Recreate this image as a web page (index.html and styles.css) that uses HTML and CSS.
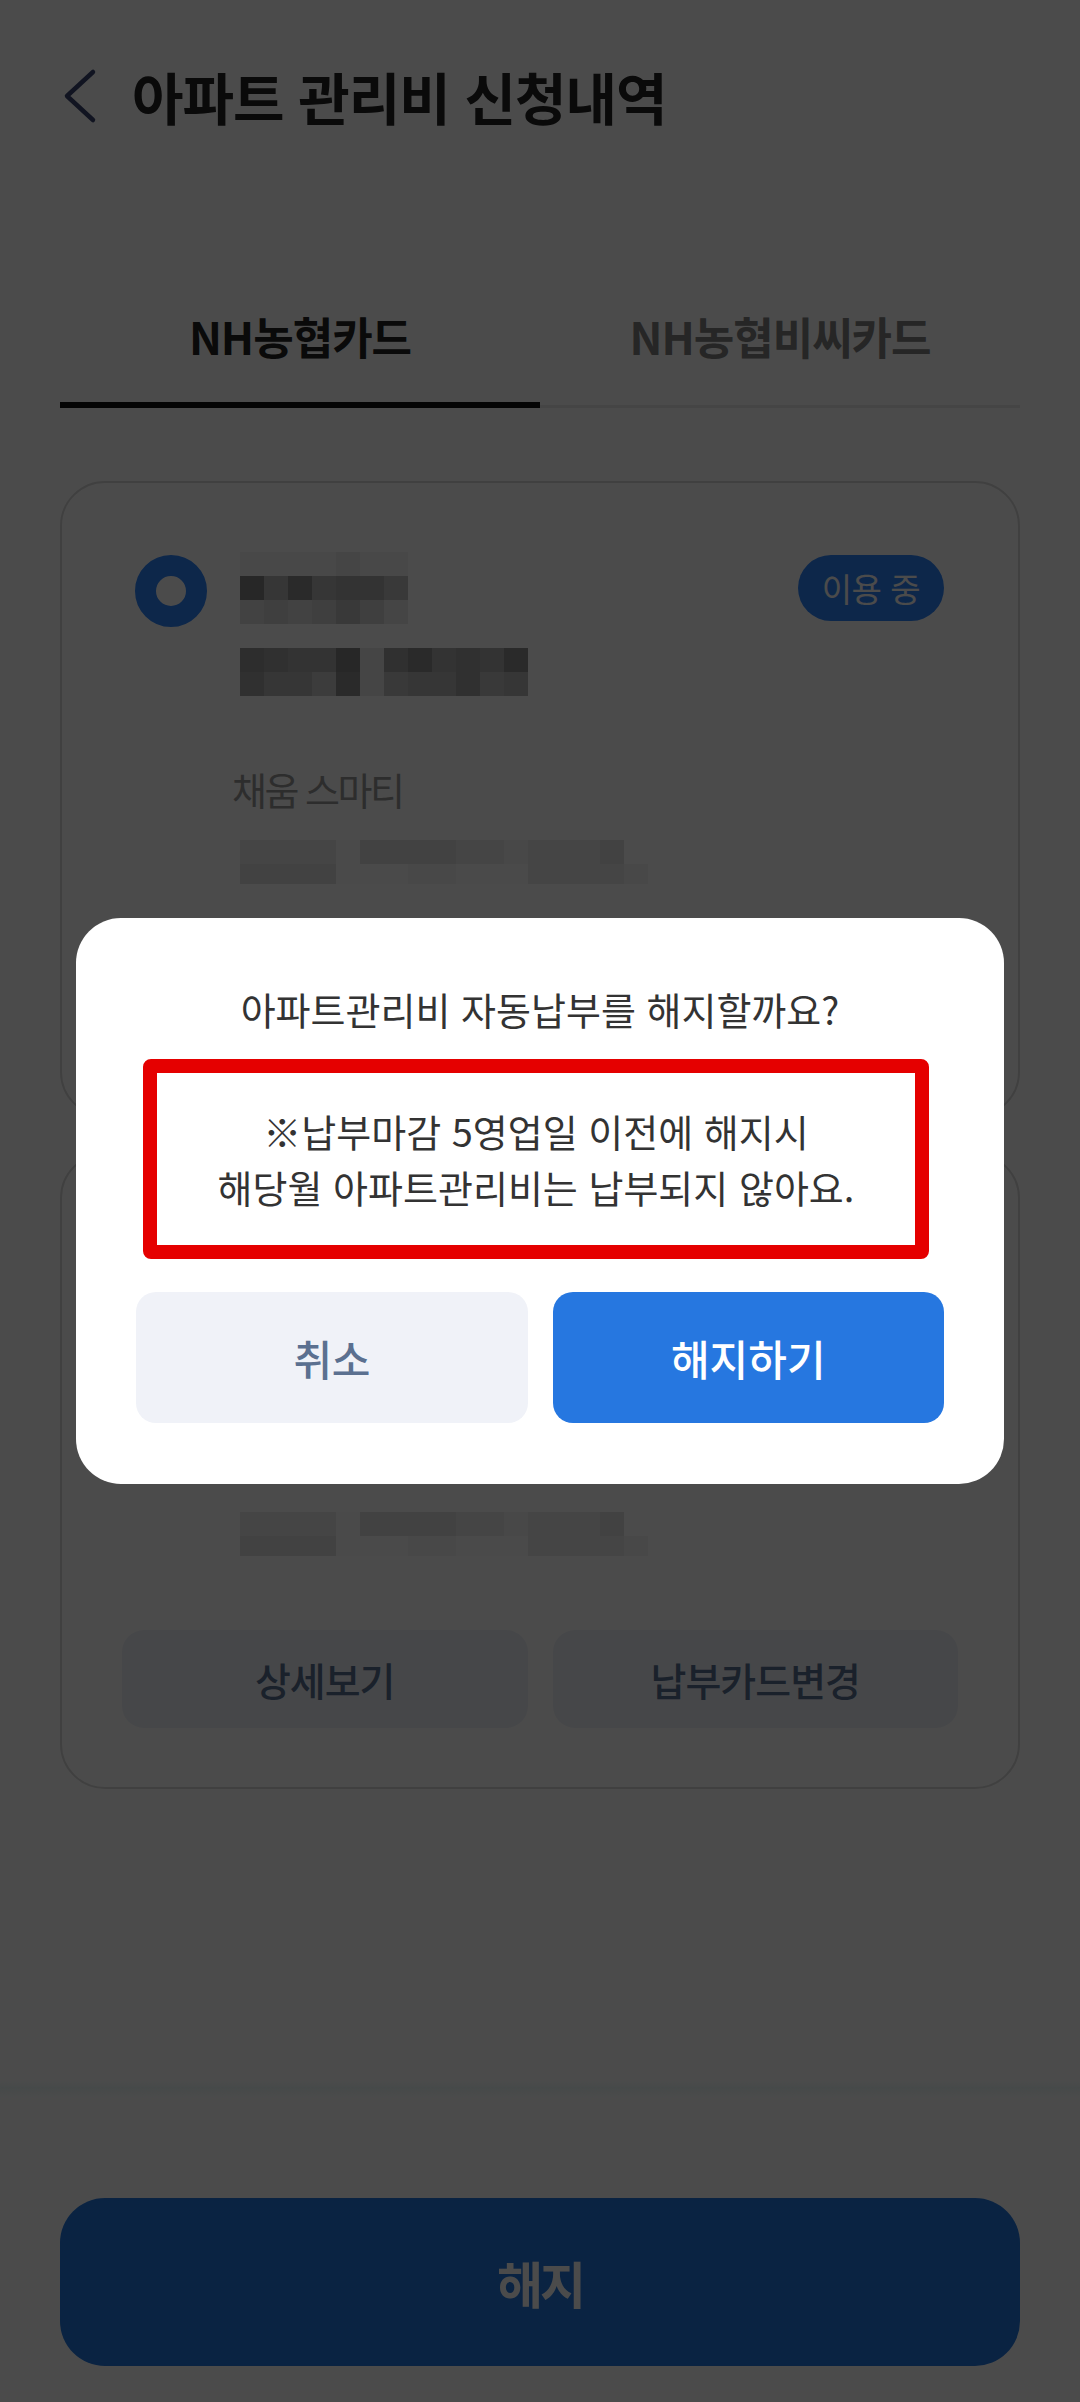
FILE: index.html
```html
<!DOCTYPE html>
<html lang="ko">
<head>
<meta charset="utf-8">
<title>아파트 관리비 신청내역</title>
<link rel="stylesheet" href="styles.css">
</head>
<body>
<div class="app">
  <header class="header">
    <svg class="back" viewBox="0 0 40 64" width="40" height="64" aria-hidden="true">
      <polyline points="33,8 7,32 33,56" fill="none" stroke="currentColor" stroke-width="4.5" stroke-linecap="round" stroke-linejoin="round"/>
    </svg>
    <h1 class="title">아파트 관리비 신청내역</h1>
  </header>

  <nav class="tabs">
    <div class="tab active">NH농협카드</div>
    <div class="tab">NH농협비씨카드</div>
  </nav>

  <section class="cards">
    <article class="card">
      <div class="card-top">
        <span class="radio on"></span>
        <div class="info">
          <div class="mosaic w7">
            <i class="q72"></i><i class="q72"></i><i class="q72"></i><i class="q72"></i><i class="q69"></i><i class="q72"></i><i class="q72"></i>
            <i class="q39"></i><i class="q54"></i><i class="q42"></i><i class="q54"></i><i class="q51"></i><i class="q51"></i><i class="q57"></i>
            <i class="q66"></i><i class="q63"></i><i class="q66"></i><i class="q63"></i><i class="q57"></i><i class="q63"></i><i class="q69"></i>
          </div>
          <div class="mosaic w12 gap-a">
            <i class="q45"></i><i class="q48"></i><i class="q51"></i><i class="q51"></i><i class="q39"></i><i class="q69"></i><i class="q48"></i><i class="q42"></i><i class="q51"></i><i class="q48"></i><i class="q51"></i><i class="q42"></i>
            <i class="q48"></i><i class="q54"></i><i class="q54"></i><i class="q60"></i><i class="q42"></i><i class="q69"></i><i class="q57"></i><i class="q54"></i><i class="q54"></i><i class="q48"></i><i class="q57"></i><i class="q54"></i>
          </div>
          <p class="label">채움 스마티</p>
          <div class="mosaic w17 gap-b">
            <i class="q69"></i><i class="q69"></i><i class="q69"></i><i class="q69"></i><i class="q74"></i><i class="q66"></i><i class="q66"></i><i class="q66"></i><i class="q66"></i><i class="q69"></i><i class="q69"></i><i class="q72"></i><i class="q69"></i><i class="q69"></i><i class="q69"></i><i class="q66"></i><i></i>
            <i class="q66"></i><i class="q66"></i><i class="q66"></i><i class="q66"></i><i class="q74"></i><i class="q74"></i><i class="q74"></i><i class="q72"></i><i class="q72"></i><i class="q74"></i><i class="q74"></i><i class="q74"></i><i class="q69"></i><i class="q69"></i><i class="q69"></i><i class="q69"></i><i class="q72"></i>
          </div>
        </div>
        <span class="badge">이용 중</span>
      </div>
      <div class="card-actions">
        <button class="soft-btn">상세보기</button>
        <button class="soft-btn">납부카드변경</button>
      </div>
    </article>

    <article class="card">
      <div class="card-top">
        <span class="radio"></span>
        <div class="info">
          <div class="mosaic w7">
            <i class="q72"></i><i class="q72"></i><i class="q69"></i><i class="q72"></i><i class="q72"></i><i class="q69"></i><i class="q72"></i>
            <i class="q42"></i><i class="q51"></i><i class="q45"></i><i class="q54"></i><i class="q48"></i><i class="q54"></i><i class="q57"></i>
            <i class="q66"></i><i class="q63"></i><i class="q63"></i><i class="q66"></i><i class="q60"></i><i class="q63"></i><i class="q69"></i>
          </div>
          <div class="mosaic w12 gap-a">
            <i class="q45"></i><i class="q48"></i><i class="q51"></i><i class="q51"></i><i class="q39"></i><i class="q69"></i><i class="q48"></i><i class="q42"></i><i class="q51"></i><i class="q48"></i><i class="q51"></i><i class="q42"></i>
            <i class="q48"></i><i class="q54"></i><i class="q54"></i><i class="q60"></i><i class="q42"></i><i class="q69"></i><i class="q57"></i><i class="q54"></i><i class="q54"></i><i class="q48"></i><i class="q57"></i><i class="q54"></i>
          </div>
          <p class="label">채움 스마티</p>
          <div class="mosaic w17 gap-b">
            <i class="q69"></i><i class="q69"></i><i class="q69"></i><i class="q69"></i><i class="q74"></i><i class="q66"></i><i class="q66"></i><i class="q66"></i><i class="q66"></i><i class="q69"></i><i class="q69"></i><i class="q72"></i><i class="q69"></i><i class="q69"></i><i class="q69"></i><i class="q66"></i><i></i>
            <i class="q66"></i><i class="q66"></i><i class="q66"></i><i class="q66"></i><i class="q74"></i><i class="q74"></i><i class="q74"></i><i class="q72"></i><i class="q72"></i><i class="q74"></i><i class="q74"></i><i class="q74"></i><i class="q69"></i><i class="q69"></i><i class="q69"></i><i class="q69"></i><i class="q72"></i>
          </div>
        </div>
      </div>
      <div class="card-actions">
        <button class="soft-btn">상세보기</button>
        <button class="soft-btn">납부카드변경</button>
      </div>
    </article>
  </section>

  <footer class="footer">
    <button class="primary-btn">해지</button>
  </footer>
</div>

<div class="dim">
  <div class="modal" role="dialog">
    <p class="modal-title">아파트관리비 자동납부를 해지할까요?</p>
    <div class="notice">
      <p>※납부마감 5영업일 이전에 해지시</p>
      <p>해당월 아파트관리비는 납부되지 않아요.</p>
    </div>
    <div class="modal-actions">
      <button class="btn-cancel">취소</button>
      <button class="btn-confirm">해지하기</button>
    </div>
  </div>
</div>
</body>
</html>
```

FILE: styles.css
```css
* { box-sizing: border-box; }

html, body {
  margin: 0;
  padding: 0;
  width: 1080px;
  height: 2402px;
  overflow: hidden;
  background: #ffffff;
  font-family: "Noto Sans CJK KR", "Noto Sans", sans-serif;
  color: #222222;
}

p { margin: 0; }

button {
  font-family: inherit;
  border: 0;
  padding: 0;
  cursor: pointer;
}

.app {
  display: flex;
  flex-direction: column;
  height: 2402px;
}

/* header */
.header {
  height: 192px;
  display: flex;
  align-items: center;
  padding-left: 60px;
}

.back {
  display: block;
  color: #3a4670;
  flex: none;
}

.title {
  margin: 0 0 0 32px;
  font-size: 56px;
  line-height: 64px;
  font-weight: 700;
  letter-spacing: -1px;
  color: #222222;
}

/* tabs */
.tabs {
  display: flex;
  margin: 84px 60px 0;
}

.tab {
  flex: 1;
  height: 132px;
  padding-top: 30px;
  text-align: center;
  font-size: 44px;
  line-height: 60px;
  font-weight: 700;
  letter-spacing: -1px;
  color: #808080;
  border-bottom: 3px solid #ebebeb;
}

.tab.active {
  color: #222222;
  border-bottom: 6px solid #111111;
}

/* cards */
.cards {
  display: flex;
  flex-direction: column;
  gap: 36px;
  margin: 73px 60px 0;
}

.card {
  border: 2px solid #dadada;
  border-radius: 45px;
  padding: 69px 60px 59px;
  background: #ffffff;
}

.card-top {
  display: flex;
  align-items: flex-start;
}

.radio {
  flex: none;
  width: 72px;
  height: 72px;
  margin: 3px 0 0 13px;
  border-radius: 50%;
  border: 21px solid #d0d4dc;
  background: #ffffff;
}

.radio.on {
  border-color: #2c84fb;
}

.info {
  flex: 1;
  margin-left: 33px;
  display: flex;
  flex-direction: column;
  align-items: flex-start;
}

.mosaic {
  display: grid;
  grid-auto-rows: 24px;
}

.mosaic.w7 { grid-template-columns: repeat(7, 24px); }
.mosaic.w12 { grid-template-columns: repeat(12, 24px); }
.mosaic.w17 { grid-template-columns: repeat(17, 24px); grid-template-rows: 24px 20px; }

.gap-a { margin-top: 24px; }
.gap-b { margin-top: 25px; }

.mosaic i { display: block; }

.q39 { background: #858585; }
.q42 { background: #8f8f8f; }
.q45 { background: #999999; }
.q48 { background: #a3a3a3; }
.q51 { background: #adadad; }
.q54 { background: #b8b8b8; }
.q57 { background: #c2c2c2; }
.q60 { background: #cccccc; }
.q63 { background: #d6d6d6; }
.q66 { background: #e0e0e0; }
.q69 { background: #ebebeb; }
.q72 { background: #f5f5f5; }
.q74 { background: #fbfbfb; }

.label {
  margin-top: 67px;
  margin-left: -8px;
  font-size: 38px;
  line-height: 52px;
  letter-spacing: -2.5px;
  color: #9a9a9a;
}

.badge {
  flex: none;
  margin: 3px 14px 0 0;
  height: 66px;
  padding: 0 24px;
  border-radius: 33px;
  background: #2c84fb;
  color: #ffffff;
  font-size: 33px;
  line-height: 66px;
  letter-spacing: -0.5px;
}

.card-actions {
  display: grid;
  grid-template-columns: 1fr 1fr;
  gap: 25px;
  margin-top: 74px;
}

.soft-btn {
  height: 98px;
  border-radius: 22px;
  background: #eff2f8;
  color: #5a7191;
  font-size: 39px;
  font-weight: 500;
  letter-spacing: -1px;
}

/* footer */
.footer {
  margin-top: auto;
  padding: 118px 60px 36px;
  background: linear-gradient(to bottom, #ffffff 0, #eef9f9 8px, #ffffff 18px, #ffffff 100%);
}

.primary-btn {
  display: block;
  width: 100%;
  height: 168px;
  border-radius: 45px;
  background: #2277e0;
  color: #ffffff;
  font-size: 50px;
  font-weight: 700;
  letter-spacing: -3px;
}

/* dim overlay + dialog */
.dim {
  position: fixed;
  inset: 0;
  background: rgba(0, 0, 0, 0.706);
  display: flex;
  align-items: center;
  justify-content: center;
}

.modal {
  width: 928px;
  background: #ffffff;
  border-radius: 45px;
  padding: 65px 60px 61px;
}

.modal-title {
  text-align: center;
  font-size: 38px;
  line-height: 52px;
  letter-spacing: 0;
  color: #333333;
}

.notice {
  margin: 24px 15px 0 7px;
  border: 14px solid #e50000;
  border-radius: 8px;
  padding: 30px 0;
  text-align: center;
  font-size: 38px;
  line-height: 56px;
  letter-spacing: 0;
  color: #333333;
}

.modal-actions {
  display: grid;
  grid-template-columns: 1fr 1fr;
  gap: 25px;
  margin-top: 33px;
}

.btn-cancel,
.btn-confirm {
  height: 131px;
  border-radius: 20px;
  font-size: 42px;
  font-weight: 500;
  letter-spacing: -0.5px;
}

.btn-cancel {
  background: #f0f2f8;
  color: #5b7090;
}

.btn-confirm {
  background: #2677e0;
  color: #ffffff;
  letter-spacing: 0;
}
```
